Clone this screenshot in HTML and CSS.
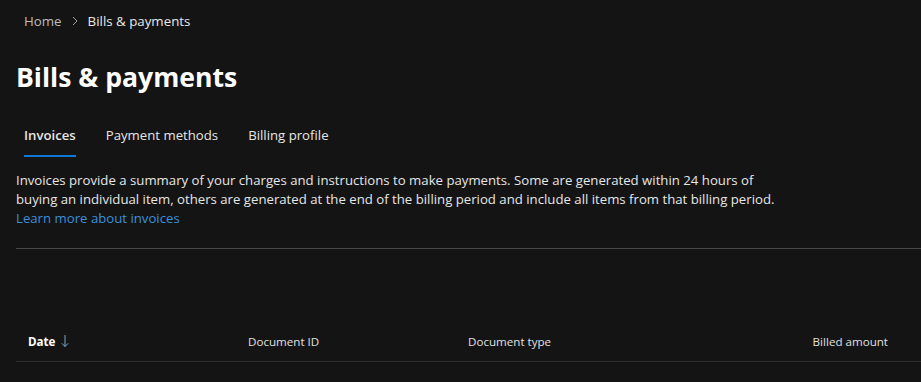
FILE: index.html
```html
<!DOCTYPE html>
<html lang="en">
<head>
<meta charset="utf-8">
<title>Bills &amp; payments</title>
<link rel="stylesheet" href="styles.css">
</head>
<body>
<div class="page">
  <nav class="crumbs">
    <span class="crumb-home">Home</span>
    <svg class="crumb-sep" width="8" height="12" viewBox="0 0 8 12"><path d="M2 2 L6 6 L2 10" fill="none" stroke="#a0a0a0" stroke-width="1"/></svg>
    <span class="crumb-current">Bills &amp; payments</span>
  </nav>
  <h1 class="title">Bills &amp; payments</h1>
  <div class="tabs">
    <div class="tab active">Invoices</div>
    <div class="tab">Payment methods</div>
    <div class="tab">Billing profile</div>
  </div>
  <p class="intro">Invoices provide a summary of your charges and instructions to make payments. Some are generated within 24 hours of buying an individual item, others are generated at the end of the billing period and include all items from that billing period.<br><a class="link" href="#">Learn more about invoices</a></p>
  <div class="divider"></div>
  <div class="table-head">
    <div class="col col-date">Date
      <svg class="sort" width="8" height="14" viewBox="0 0 8 14"><path d="M4 1 V12.5 M0.8 9.3 L4 12.5 L7.2 9.3" fill="none" stroke="#7fa6cf" stroke-width="1"/></svg>
    </div>
    <div class="col">Document ID</div>
    <div class="col">Document type</div>
    <div class="col col-amount">Billed amount</div>
  </div>
</div>
</body>
</html>
```
FILE: styles.css
```css
html, body {
  margin: 0;
  padding: 0;
  background: #141414;
}
body {
  font-family: "Open Sans", "Noto Sans", sans-serif;
  color: #e6e6e6;
  overflow: hidden;
  height: 382px;
}
.page {
  padding: 0 0 0 16px;
}
.crumbs {
  display: flex;
  align-items: center;
  gap: 9px;
  height: 42px;
  padding-left: 8px;
  font-size: 13.3px;
}
.crumb-home { color: #bdbdbd; }
.crumb-current { color: #e8e8e8; }
.title {
  margin: 17px 0 0;
  font-size: 26.6px;
  font-weight: 700;
  color: #ffffff;
  line-height: 36px;
}
.tabs {
  display: flex;
  gap: 30px;
  margin-top: 20px;
  padding-left: 8px;
}
.tab {
  font-size: 13.2px;
  color: #e6e6e6;
  padding: 10px 0;
  line-height: 20px;
  border-bottom: 2px solid transparent;
}
.tab.active {
  font-weight: 600;
  border-bottom-color: #0f78d4;
}
.intro {
  margin: 14px 0 0;
  font-size: 13.2px;
  line-height: 19px;
  max-width: 775px;
}
.link {
  color: #3a8fdc;
  text-decoration: none;
}
.divider {
  margin-top: 20px;
  height: 1px;
  background: #474747;
}
.table-head {
  display: grid;
  grid-template-columns: 220px 220px 220px 1fr;
  margin-top: 72px;
  height: 40px;
  align-items: center;
  padding-left: 12px;
  font-size: 11.6px;
  color: #e0e0e0;
  border-bottom: 1px solid #2e2e2e;
}
.col-date {
  font-weight: 700;
  color: #ffffff;
  display: flex;
  align-items: center;
  gap: 6px;
}
.col-amount {
  text-align: right;
  padding-right: 33px;
}
```
